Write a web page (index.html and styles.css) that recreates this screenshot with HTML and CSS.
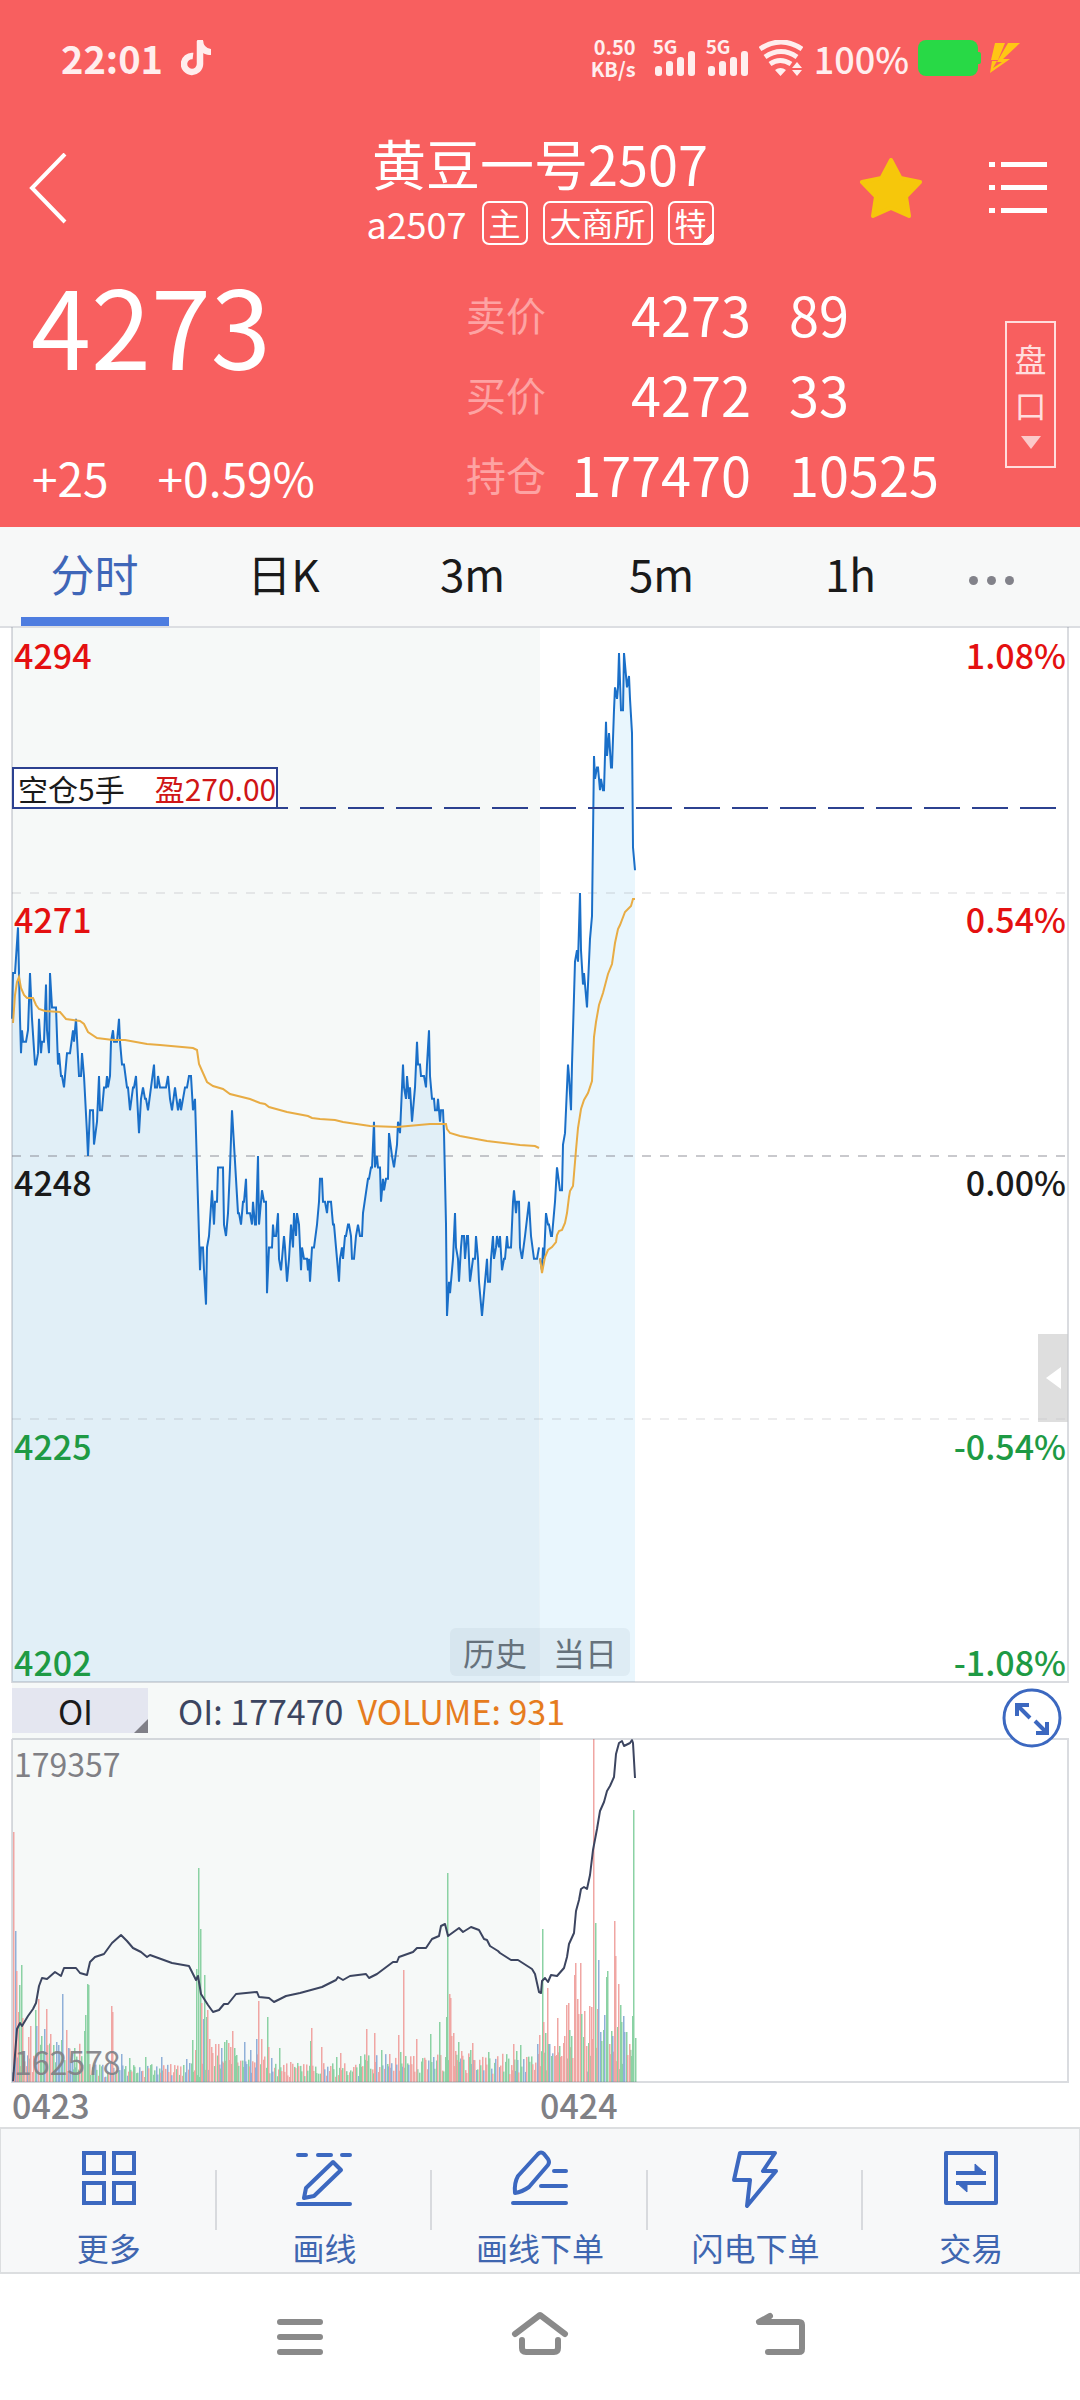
FILE: index.html
```html
<!DOCTYPE html>
<html lang="zh-CN">
<head>
<meta charset="utf-8">
<meta name="viewport" content="width=device-width, initial-scale=1">
<title>黄豆一号2507</title>
<link rel="stylesheet" href="styles.css">
</head>
<body>
<header class="header">
  <div class="status">
    <span class="clock">22:01</span>
    <svg class="note" viewBox="0 0 30 36" width="30" height="36"><path d="M19 1v23a8 8 0 1 1-7-8" fill="none" stroke="#ffeeee" stroke-width="6.500"/><path d="M16 0h6c0 5 3 8 8 9v6c-5 0-9-2-11-5z" fill="#ffeeee"/></svg>
    <span class="speed"><span>0.50</span><span>KB/s</span></span>
    <span class="signal"><b>5G</b><svg viewBox="0 0 42 26" width="42" height="26" fill="#ffeeee"><rect x="2" y="16" width="7" height="10" rx="3"/><rect x="13" y="11" width="7" height="15" rx="3"/><rect x="24" y="7" width="7" height="19" rx="3"/><rect x="35" y="1" width="7" height="25" rx="3"/></svg></span>
    <span class="signal"><b>5G</b><svg viewBox="0 0 42 26" width="42" height="26" fill="#ffeeee"><rect x="2" y="16" width="7" height="10" rx="3"/><rect x="13" y="11" width="7" height="15" rx="3"/><rect x="24" y="7" width="7" height="19" rx="3"/><rect x="35" y="1" width="7" height="25" rx="3"/></svg></span>
    <svg class="wifi" viewBox="0 0 44 36" width="44" height="36"><g fill="none" stroke="#ffeeee" stroke-width="5"><path d="M1 9q21-14 42 0"/><path d="M6 17q16-11 32 0"/><path d="M11 24q10-7 21 0"/></g><path d="M16 30q5.500-4 11 0l-5.500 6zM33 28l5-6 5 6zM33 30h10l-5 6z" fill="#ffeeee"/></svg>
    <span class="percent">100%</span>
    <svg class="battery" viewBox="0 0 64 36" width="64" height="36"><rect width="60" height="36" rx="8" fill="#28d946"/><rect x="58" y="12" width="5" height="12" rx="2" fill="#28d946"/></svg>
    <svg class="charge" viewBox="0 0 30 30" width="30" height="30" fill="#ffc614"><path d="M5 0h10L8 17H1zM18 0h12L13 16h7L0 30l2-12h5l-4 7 9-6H7z"/></svg>
  </div>

  <div class="titlebar">
    <button class="icon-btn" aria-label="返回"><svg viewBox="0 0 40 72" width="40" height="72"><path d="M37 1 4 35l33 34" fill="none" stroke="#fff" stroke-width="4"/></svg></button>
    <div class="title">
      <h1>黄豆一号2507</h1>
      <p class="sub"><span class="code">a2507</span><span class="badge">主</span><span class="badge">大商所</span><span class="badge badge-corner">特</span></p>
    </div>
    <button class="icon-btn star" aria-label="自选"><svg viewBox="0 0 64 62" width="64" height="62"><path d="M32 2 41.500 20 61 24 47 38.500 50 58 32 50 14 58 17 38.500 3 24 22.500 20z" fill="#f6c70b" stroke="#f6c70b" stroke-width="4" stroke-linejoin="round"/></svg></button>
    <button class="icon-btn" aria-label="列表"><svg viewBox="0 0 58 54" width="58" height="54" fill="#fff"><path d="M0 0h6v5H0zM12 0h46v5H12zM0 23h6v5H0zM12 23h46v5H12zM0 46h6v5H0zM12 46h46v5H12z"/></svg></button>
  </div>

  <div class="quote">
    <div class="last">
      <strong class="price">4273</strong>
      <span class="change"><span>+25</span><span>+0.59%</span></span>
    </div>
    <table class="book">
      <tr><th scope="row">卖价</th><td class="num">4273</td><td class="qty">89</td></tr>
      <tr><th scope="row">买价</th><td class="num">4272</td><td class="qty">33</td></tr>
      <tr><th scope="row">持仓</th><td class="num">177470</td><td class="qty">10525</td></tr>
    </table>
    <button class="depth"><span>盘</span><span>口</span><svg viewBox="0 0 20 13" width="20" height="13"><path d="M0 0h20L10 13z" fill="#fcc9c9"/></svg></button>
  </div>
</header>

<nav class="tabs">
  <button class="tab tab-on">分时</button>
  <button class="tab">日K</button>
  <button class="tab">3m</button>
  <button class="tab">5m</button>
  <button class="tab">1h</button>
  <button class="tab tab-more" aria-label="更多周期"><i></i><i></i><i></i></button>
</nav>

<main class="charts">
  <section class="pane">
    <svg class="plot" id="price" viewBox="0 1 1056 1054"></svg>
    <ul class="scale">
      <li class="up">4294</li><li class="up">4271</li><li>4248</li><li class="down split"><span>4225</span><span>4202</span></li>
    </ul>
    <ul class="scale scale-right">
      <li class="up">1.08%</li><li class="up">0.54%</li><li>0.00%</li><li class="down split"><span>-0.54%</span><span>-1.08%</span></li>
    </ul>
    <div class="position"><span>空仓5手</span><span class="profit">盈270.00</span></div>
    <div class="days"><span>历史</span><span>当日</span></div>
    <button class="handle" aria-label="展开侧栏"><svg viewBox="0 0 15 22" width="15" height="22"><path d="M15 0v22L0 11z" fill="#fff"/></svg></button>
  </section>

  <div class="indicator">
    <label class="picker"><select aria-label="指标"><option>OI</option></select></label>
    <span class="oi">OI: 177470</span>
    <span class="volume">VOLUME: 931</span>
    <button class="expand" aria-label="全屏"><svg viewBox="0 0 60 60" width="60" height="60"><circle cx="30" cy="30" r="28" fill="#fff" stroke="#3c68c0" stroke-width="3"/><g fill="none" stroke="#3c68c0" stroke-width="4"><path d="M15 28V17h12M16 18l12 12M33 33l12 12M34 45h11V34"/></g></svg></button>
  </div>

  <section class="pane">
    <svg class="plot" id="volume" viewBox="0 0 1056 344"></svg>
    <span class="bound bound-top">179357</span>
    <span class="bound bound-bottom">162578</span>
  </section>
</main>
<div class="dates"><span>0423</span><span>0424</span></div>

<nav class="tools">
  <button class="tool"><svg viewBox="0 0 60 60" width="60" height="60" fill="none" stroke="#3c68c0" stroke-width="4"><path d="M5 5h20v20H5zM35 5h20v20H35zM5 35h20v20H5zM35 35h20v20H35z"/></svg>更多</button>
  <button class="tool"><svg viewBox="0 0 60 60" width="60" height="60" fill="none" stroke="#3c68c0" stroke-width="4" stroke-linecap="round" stroke-linejoin="round"><path d="M4 7h8M24 7h13M48 7h8M4 56h52M39 14l8 8-27 26-10 2 2-10z"/></svg>画线</button>
  <button class="tool"><svg viewBox="0 0 60 60" width="60" height="60" fill="none" stroke="#3c68c0" stroke-width="4" stroke-linecap="round" stroke-linejoin="round"><path d="M3 55h53M31 38h25M44 23h12M28 6q3-3 6 0l4 5q2 3 0 6L19 39Q12 44 5 45q-1-10 3-17z"/></svg>画线下单</button>
  <button class="tool"><svg viewBox="0 0 60 60" width="60" height="60" fill="none" stroke="#3c68c0" stroke-width="4" stroke-linecap="round" stroke-linejoin="round"><path d="M14 5h35L37 23h13L21 58l3-26H8z"/></svg>闪电下单</button>
  <button class="tool"><svg viewBox="0 0 60 60" width="60" height="60" fill="none" stroke="#3c68c0" stroke-width="4" stroke-linejoin="round"><path d="M5 5h50v50H5z"/><path d="M15 25h30M15 35h30"/><path d="M34 16v9h10zM16 35h10v9z" fill="#3c68c0" stroke-width="1"/></svg>交易</button>
</nav>

<nav class="system">
  <button class="icon-btn" aria-label="最近任务"><svg viewBox="0 0 60 60" width="60" height="60" fill="none" stroke="#8a8a8a" stroke-width="6" stroke-linecap="round"><path d="M10 15h40M10 30h40M10 45h40"/></svg></button>
  <button class="icon-btn" aria-label="主屏幕"><svg viewBox="0 0 60 60" width="60" height="60" fill="none" stroke="#8a8a8a" stroke-width="6" stroke-linecap="round" stroke-linejoin="round"><path d="M5 27 30 8l25 19M12 33v8q0 4 4 4h28q4 0 4-4v-8"/></svg></button>
  <button class="icon-btn" aria-label="返回上一页"><svg viewBox="0 0 60 60" width="60" height="60" fill="none" stroke="#8a8a8a" stroke-width="6" stroke-linecap="round" stroke-linejoin="round"><path d="M20 9 9 15h40q3 0 3 3v24q0 3-3 3H18"/></svg></button>
</nav>
<script src="chart.js"></script>
</body>
</html>
```

FILE: styles.css
```css
* { box-sizing: border-box; }

body {
  margin: 0;
  background: #fff;
  color: #1a1a1a;
  font-family: "Noto Sans CJK SC", "Noto Sans", sans-serif;
}

h1, p, ul { margin: 0; padding: 0; font-weight: 400; list-style: none; }

button, select {
  margin: 0;
  padding: 0;
  border: 0;
  background: none;
  color: inherit;
  font: inherit;
}

svg { display: block; flex: none; }

.icon-btn { display: flex; }

/* header */
.header { background: #f85f5f; color: #fff; padding-bottom: 13px; }

.status {
  display: flex;
  align-items: center;
  height: 116px;
  padding: 0 60px 0 61px;
  color: #fee;
}
.clock { font-size: 38px; line-height: 48px; font-weight: 700; }
.note { margin-left: 18px; }
.speed {
  display: flex;
  flex-direction: column;
  margin-left: auto;
  margin-right: 17px;
  font-size: 20px;
  line-height: 22px;
  font-weight: 700;
  text-align: right;
}
.signal { display: flex; position: relative; padding-top: 10px; margin-right: 11px; }
.signal b { position: absolute; left: 0; top: 0; font-size: 19px; line-height: 12px; }
.percent { margin: 0 9px 0 11px; font-size: 36px; line-height: 48px; font-weight: 500; }
.charge { margin-left: 8px; }

.titlebar {
  display: flex;
  align-items: center;
  position: relative;
  height: 129px;
  padding: 16px 33px 0 28px;
}
.title { position: absolute; left: 0; right: 0; bottom: 0; pointer-events: none; }
.title h1 { font-size: 54px; line-height: 60px; text-align: center; }
.sub { display: flex; justify-content: center; align-items: center; gap: 15px; margin-top: 8px; }
.code { font-size: 36px; line-height: 44px; }
.badge {
  height: 44px;
  padding: 0 5px;
  border: 2px solid #fff;
  border-radius: 7px;
  font-size: 32px;
  line-height: 38px;
}
.badge-corner { background: linear-gradient(135deg, transparent 88%, #fff 88%); }
.star { margin-left: auto; margin-right: 66px; }

.quote {
  display: grid;
  grid-template-columns: 433fr 539fr 51px;
  align-items: center;
  padding: 29px 24px 0 33px;
}
.last { display: flex; flex-direction: column; justify-content: space-between; height: 240px; }
.price { font-size: 108px; line-height: 98px; font-weight: 400; margin-left: -2px; }
.change { display: flex; gap: 49px; margin-left: -1px; font-size: 46px; line-height: 74px; }
.book { border-collapse: collapse; width: 100%; }
.book th, .book td { height: 80px; padding: 0; line-height: 72px; text-align: left; }
.book th { width: 85px; font-size: 40px; font-weight: 400; color: #fda3a3; }
.book td { font-size: 54px; }
.book .num { width: 200px; text-align: right; }
.book .qty { padding-left: 38px; }
.depth {
  display: flex;
  flex-direction: column;
  align-items: center;
  padding: 12px 0 17px;
  border: 2px solid #fdd;
  font-size: 32px;
  line-height: 46px;
  color: #fdd;
}
.depth svg { margin-top: 9px; }

/* period tabs */
.tabs {
  display: flex;
  height: 101px;
  padding-right: 42px;
  background: #f7f8f8;
  border-bottom: 2px solid #dcdee2;
}
.tab { flex: 189; display: flex; justify-content: center; font-size: 44px; line-height: 92px; }
.tab-on { color: #3f66b8; background: linear-gradient(#4e7de0, #4e7de0) center bottom / 148px 9px no-repeat; }
.tab-more { flex: 93; align-items: center; gap: 9px; padding-top: 7px; }
.tab-more i { width: 9px; height: 9px; border-radius: 50%; background: #82828a; }

/* charts */
.charts { margin: 0 12px; background: linear-gradient(to right, #f6f9f8 50%, #fff 50%); }
.pane { position: relative; }
.plot { width: 100%; height: auto; overflow: visible; }

.scale {
  position: absolute;
  inset: 0;
  display: grid;
  grid-template-rows: repeat(4, 1fr);
  padding: 0 2px;
  font-size: 34px;
  line-height: 40px;
  font-weight: 500;
}
.scale li { padding-top: 7px; }
.scale-right { text-align: right; }
.split { display: flex; flex-direction: column; justify-content: space-between; }
.up { color: #e41010; }
.down { color: #1e9a44; }

.position {
  position: absolute;
  left: 0;
  bottom: 82%;
  bottom: calc(82% + 9px);
  display: flex;
  gap: 30px;
  padding-left: 4px;
  background: #fff;
  border: 2px solid #2c4190;
  font-size: 30px;
  line-height: 38px;
}
.profit { color: #d01616; }

.days {
  position: absolute;
  left: 50%;
  bottom: 6px;
  display: flex;
  transform: translateX(-50%);
  border-radius: 6px;
  background: rgba(150, 165, 180, .12);
  color: #66727c;
  font-size: 32px;
  line-height: 48px;
}
.days span { width: 90px; text-align: center; }

.handle {
  position: absolute;
  right: 0;
  top: 67%;
  display: flex;
  align-items: center;
  justify-content: center;
  width: 30px;
  height: 88px;
  background: rgba(200, 200, 200, .6);
}

.indicator { display: flex; align-items: center; height: 57px; padding-right: 6px; font-size: 34px; line-height: 46px; }
.picker { position: relative; width: 136px; height: 45px; margin-right: 30px; background: #e4e6f0; }
.picker select { appearance: none; width: 100%; height: 45px; padding-right: 9px; text-align: center; }
.picker::after {
  content: "";
  position: absolute;
  right: 0;
  bottom: 0;
  border: 7px solid transparent;
  border-right-color: #808088;
  border-bottom-color: #808088;
}
.oi { color: #3c4560; margin-right: 14px; }
.volume { color: #e67c1e; }
.expand { position: relative; z-index: 1; height: 45px; margin-left: auto; }

.bound { position: absolute; left: 2px; font-size: 32px; line-height: 40px; color: #808085; }
.bound-top { top: 4px; }
.bound-bottom { bottom: 2px; opacity: .9; }

.dates {
  display: grid;
  grid-template-columns: 1fr 1fr;
  margin: 0 12px;
  color: #808085;
  font-size: 34px;
  line-height: 44px;
  font-weight: 500;
}

/* bottom toolbar */
.tools {
  display: flex;
  padding: 19px 0 5px;
  background: #f7f8f9;
  border: solid #dcdee0;
  border-width: 2px 1px;
}
.tool {
  flex: 1;
  display: flex;
  flex-direction: column;
  align-items: center;
  gap: 19px;
  font-size: 32px;
  line-height: 40px;
  color: #3f66b0;
  background: linear-gradient(#d8dade, #d8dade) right 22px / 2px 60px no-repeat;
}
.tool:last-child { background: none; }

.system { display: flex; justify-content: center; gap: 180px; padding: 33px 0; }

/* plotted series */
.history-area { fill: #e1eff7; }
.today-area { fill: #e9f6fd; }
.price-line, .avg-line, .oi-line, .grid, .zero, .entry, .frame { fill: none; vector-effect: non-scaling-stroke; }
.price-line { stroke: #1a6fc8; stroke-width: 2; }
.avg-line { stroke: #e8ac44; stroke-width: 2; }
.oi-line { stroke: #3c4560; stroke-width: 2; stroke-linejoin: round; }
.grid { stroke: rgba(120, 120, 130, .14); stroke-width: 2; stroke-dasharray: 9 9; }
.zero { stroke: rgba(120, 120, 130, .4); stroke-width: 2; stroke-dasharray: 9 9; }
.entry { stroke: #2c4190; stroke-width: 2; stroke-dasharray: 36 12; }
.frame { stroke: rgba(120, 125, 140, .27); stroke-width: 2; }
.bar-r { fill: #f0a6a3; }
.bar-g { fill: #8bd2a4; }
.bar-b { fill: #8fb0d8; }
```

FILE: chart.js
```js
const NS = "http://www.w3.org/2000/svg";

function draw(parent, tag, attrs) {
  const node = document.createElementNS(NS, tag);
  for (const key in attrs) node.setAttribute(key, attrs[key]);
  parent.appendChild(node);
}

function pairs(text) {
  return text.trim().split(/\s+/).map(p => p.split(",").map(Number));
}

// x position, price above 4200
const history = pairs(`0,60 1,64 3,64 6,68 7,64 8,60 9,57 10,59 11,58 14,58 16,59 18,64 20,60 23,56 24,56 26,57 27,60 29,57 30,58 32,58
34,63 35,59 37,57 38,64 40,61 44,61 46,56 47,57 49,55 50,55 52,54 55,57 58,57 61,59 62,58 64,60 67,55 69,55 70,57 72,55 75,50 76,48
78,52 81,52 82,49 85,51 87,55 88,52 90,52 92,54 94,54 95,55 96,54 98,55 99,58 101,59 102,58 105,58 107,60 108,58 110,56 112,56 115,54
116,54 118,52 121,54 122,54 124,55 127,50 129,53 131,54 133,53 134,53 136,52 139,54 142,56 143,54 145,54 146,55 148,54 154,54 156,55
158,53 160,52 163,54 166,52 168,53 169,52 171,53 173,54 175,54 177,55 179,55 181,52 183,53 184,50 186,44 188,38 189,40 191,40 192,38
194,35 195,40 197,41 200,45 202,42 203,44 205,44 206,47 211,47 212,42 214,41 216,43 218,47 220,52 222,49 224,46 226,43 227,43 229,42
231,44 232,44 234,46 235,43 238,43 240,42 241,44 243,42 244,42 246,48 247,42 249,44 250,45 252,44 254,44 255,36 257,40 260,40 261,42
262,41 264,41 266,43 267,39 269,38 272,41 273,40 275,37 277,39 279,42 281,40 282,43 284,41 285,43 287,42 289,38 290,40 292,39 295,39
296,38 297,39 298,37 300,40 302,40 305,42 307,44 308,46 310,46 311,44 313,44 315,43 316,44 319,44 321,42 322,42 324,40 325,39 327,37
328,39 330,40 331,39 333,41 334,41 336,42 337,42 339,41 340,39 342,39 344,41 346,42 348,41 350,41 351,43 356,46 357,46 359,47 360,47
362,51 363,47 365,48 366,47 368,47 369,44 371,46 372,45 374,46 376,46 377,50 380,48 382,47 385,49 386,51 388,50 389,52 391,56 392,54
394,53 395,55 397,53 398,54 400,51 403,54 405,58 406,56 408,56 409,55 412,55 414,54 415,56 417,59 418,55 420,53 422,53 423,52 425,52
426,53 428,51 429,52 431,52 432,50 434,42 435,34 437,37 438,36 440,38 441,39 443,43 444,40 446,39 447,37 449,40 450,41 452,41 453,39
455,41 456,41 458,37 461,39 463,39 464,41 466,39 467,37 470,34 472,36 475,39 476,37 478,37 479,39 481,41 482,39 484,40 485,41 487,40
488,41 490,38 492,39 493,39 495,41 496,40 499,40 501,44 502,45 504,43 505,44 507,44 508,40 510,39 513,41 517,44 519,41 522,39 525,39 527,40`);

const today = pairs(`528,39 530,38 531,40 532,39 534,43 536,42 537,42 539,41 540,41 542,43 543,44 545,47 548,45 550,45 551,49 553,50
556,56 557,55 559,52 560,56 562,62 563,65 565,66 566,65 568,71 569,66 571,63 572,64 574,62 575,61 578,67 580,69 582,83 583,81 585,82
586,82 588,80 589,81 591,80 592,80 594,86 595,83 597,85 599,82 600,82 602,87 603,89 605,88 606,89 607,92 609,87 611,87 612,92 614,90
615,89 617,90 618,88 620,85 621,75 623,73`);

const priceY = p => 529 + (48 - p) * 11.43;
const historyPts = history.map(([x, p]) => [x, priceY(p)]);
const todayPts = today.map(([x, p]) => [x, priceY(p)]);

const avgHistory = pairs(`1,396 3,368 5,355 7,350 9,361 12,368 15,371 21,371 24,378 27,382 33,384 48,385 54,392 68,394 72,397 76,405 85,411
101,413 113,413 135,417 148,418 181,421 185,423 187,437 191,446 195,455 201,459 211,462 218,467 238,472 248,476 253,477 257,480 275,485
296,489 300,491 308,492 323,493 331,495 358,499 385,500 418,497 434,497 435,502 438,506 448,509 475,514 508,518 523,519 527,521`);
const avgToday = pairs(`528,631 530,646 533,630 536,623 540,620 544,615 545,608 547,604 550,603 553,596 555,586 557,570 558,564 561,559
564,523 566,501 569,482 572,473 576,466 580,454 582,410 584,395 587,378 591,366 596,347 600,337 603,316 606,302 608,298 613,285 619,279
621,272 623,272`);

const openInterest = pairs(`1,342 5,290 8,284 10,287 16,277 21,270 24,264 27,247 30,239 35,240 43,233 49,237 52,229 64,229 68,234 75,236
78,223 83,218 92,215 100,204 109,196 115,202 121,209 129,213 135,218 138,216 160,224 177,227 184,241 186,237 189,255 196,266 201,273
207,271 212,265 216,265 224,255 245,253 247,258 257,259 262,263 274,257 288,254 310,248 324,241 326,238 331,241 338,237 354,235 357,239
365,235 381,223 385,223 387,218 401,213 405,209 414,209 420,200 427,197 429,187 433,185 436,197 447,189 451,193 459,188 467,191 472,200
475,201 478,207 486,212 488,214 499,221 506,221 520,230 523,235 527,253 529,254 530,242 533,239 536,243 539,236 545,237 552,229 555,218
557,205 562,194 564,172 567,161 569,150 572,148 575,150 578,136 581,111 585,90 588,72 592,63 595,52 598,47 602,38 604,15 607,4 610,2
612,7 618,4 620,1 621,4 623,39`);

// heavy minutes: x position, bar height, direction
const heavy = `1,250,r 3,151,b 4,111,r 6,70,r 7,97,g 9,117,g 10,64,r 16,45,r 18,56,r 23,72,g 24,56,b 26,83,r 29,46,g 32,53,b 34,73,r
38,48,r 44,40,b 49,42,g 50,88,b 54,52,r 56,34,b 62,34,g 72,51,g 73,67,g 75,98,g 76,97,g 99,76,r 100,70,r 109,28,b 117,24,g 133,25,g
149,25,b 174,23,b 180,42,g 183,32,r 184,113,g 186,214,g 188,153,g 189,79,r 191,63,b 192,107,g 194,65,g 195,72,r 197,43,r 199,35,r
200,29,r 203,38,r 206,38,r 209,34,b 212,40,g 214,42,g 216,39,r 218,35,r 220,51,r 222,34,g 224,27,g 232,40,b 238,32,b 244,43,b 246,81,r
249,43,r 255,65,g 256,35,r 259,24,b 267,34,g 278,20,r 298,41,g 299,54,r 309,35,r 324,25,g 328,29,r 348,26,g 354,53,r 362,49,r 369,32,g
377,28,r 386,47,r 388,30,g 391,112,r 393,26,g 404,43,r 418,48,g 421,25,b 427,60,g 434,65,g 435,209,g 437,88,r 438,84,r 439,46,r
441,49,r 443,31,r 446,40,g 449,31,r 458,32,g 460,39,r 476,30,g 501,38,r 504,31,g 508,37,g 514,25,r 525,38,b 527,47,r 530,153,g 531,60,r
533,49,g 535,94,r 536,38,g 537,38,b 539,26,g 542,36,r 544,27,r 545,64,r 547,36,g 548,25,r 551,39,r 552,46,r 554,77,r 556,79,r 557,52,g
559,46,g 560,24,r 562,107,r 563,119,r 565,83,r 566,68,r 568,119,r 569,68,g 571,45,g 572,71,r 574,36,r 576,39,g 577,76,r 579,75,r
580,43,r 581,343,r 583,159,g 585,73,r 586,122,b 588,50,b 589,41,g 591,52,g 592,67,b 594,105,g 595,111,g 597,38,r 599,51,g 600,46,b
602,161,r 603,126,r 605,55,g 606,98,r 608,77,g 609,60,g 611,66,b 612,50,b 614,50,g 615,27,r 617,38,r 619,26,g 620,66,g 621,272,g 623,44,g`
  .split(/\s+/).map(v => v.split(","));

function area(svg, pts, from, to, cls) {
  draw(svg, "polygon", { class: cls, points: [[from, 1055], [from, pts[0][1]], ...pts, [to, 1055]].join(" ") });
}

function line(svg, pts, cls) {
  draw(svg, "polyline", { class: cls, points: pts.join(" ") });
}

const price = document.getElementById("price");
area(price, historyPts, 0, 528, "history-area");
area(price, todayPts, 528, 623, "today-area");
[266, 792].forEach(y => line(price, [[0, y], [1056, y]], "grid"));
line(price, [[0, 529], [1056, 529]], "zero");
line(price, historyPts, "price-line");
line(price, todayPts, "price-line");
line(price, avgHistory, "avg-line");
line(price, avgToday, "avg-line");
line(price, [[0, 181], [1056, 181]], "entry");
line(price, [[0, 0], [0, 1055], [1056, 1055], [1056, 0]], "frame");

const volume = document.getElementById("volume");
const taken = new Set(heavy.map(v => +v[0]));
let seed = 11;
const next = () => (seed = (seed * 16807) % 2147483647) / 2147483647;
// quiet minutes fill the gaps between the heavy ones
for (let m = 0; m < 407; m++) {
  const x = Math.round(m * 1.53);
  const base = x < 70 || x > 528 ? 24 : (x > 200 && x < 260) || x > 350 ? 18 : 12;
  const h = base * 0.4 + next() * base * 1.2;
  const kind = "rgbrg"[Math.floor(next() * 5)];
  if (!taken.has(x)) draw(volume, "rect", { class: "bar-" + kind, x, y: 343 - h, width: 1.5, height: h });
}
heavy.forEach(([x, h, kind]) => draw(volume, "rect", { class: "bar-" + kind, x, y: 343 - h, width: 1.5, height: h }));
line(volume, openInterest, "oi-line");
line(volume, [[0, 0], [1056, 0], [1056, 343], [0, 343], [0, 0]], "frame");
```
